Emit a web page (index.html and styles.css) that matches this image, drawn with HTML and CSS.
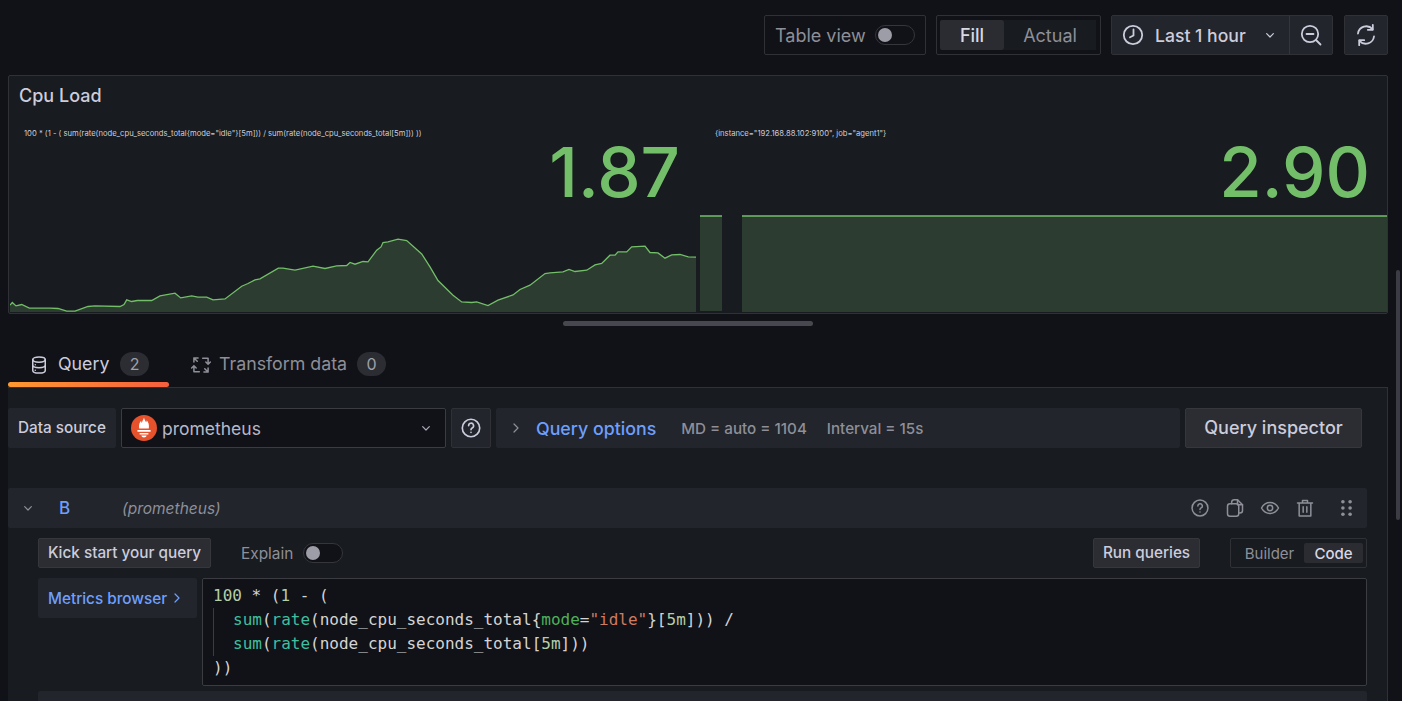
FILE: index.html
```html
<!DOCTYPE html>
<html lang="en">
<head>
    <meta charset="UTF-8">
    <meta name="viewport" content="width=device-width, initial-scale=1.0">
    <title>Cpu Load - Edit panel</title>
    <link rel="stylesheet" href="styles.css">
</head>
<body>
    <div class="page">
        <!-- Top toolbar -->
        <header class="toolbar">
            <div class="box table-view">
                <span>Table view</span>
                <span class="switch"></span>
            </div>
            <div class="box radio-group">
                <span class="radio active">Fill</span>
                <span class="radio">Actual</span>
            </div>
            <div class="time-group">
                <div class="time-picker">
                    <svg class="icon clock" viewBox="0 0 24 24"><circle cx="12" cy="12" r="9.2"/><path d="M12.5 6.5v6l-3.5 1.8"/></svg>
                    <span>Last 1 hour</span>
                    <svg class="icon chevron" viewBox="0 0 24 24"><path d="M7 10l5 5 5-5"/></svg>
                </div>
                <div class="zoom-out">
                    <svg class="icon" viewBox="0 0 24 24"><circle cx="11" cy="11" r="8.2"/><path d="M7.5 11h7M17 17l4.5 4.5"/></svg>
                </div>
            </div>
            <div class="refresh">
                <svg class="icon" viewBox="0 0 24 24"><path d="M4 10.500A8.300 8.300 0 0 1 18.500 6.200M20 13.500A8.300 8.300 0 0 1 5.500 17.800"/><path d="M18.800 1.800v5h-5M5.200 22.200v-5h5"/></svg>
            </div>
        </header>

        <!-- Stat panel -->
        <section class="panel">
            <h2 class="panel-title">Cpu Load</h2>
            <div class="stats">
                <div class="stat stat-left">
                    <svg class="spark" viewBox="0 -79.500 686 199" preserveAspectRatio="none">
                        <path class="spark-fill" d="M0 112.7L2.3 110 6 113.4 11.7 112 19.3 115.7 40 115.7 48 116 56.7 118.7 65 118.7 78 114 85 113.4 110 114 114 112 116.7 107.4 121.7 109 127.3 108 141.7 108 150 103.4 165 100.7 170.7 105.4 181.7 103.4 188 104.7 196.7 104.7 203 107.4 215 106.4 231.7 93.7 238 91 245 87.4 250 86.4 268.3 75.7 273 75.7 285 77.7 303 73.7 315 76 326.7 73.4 336.7 73 340 70 345 71.7 353 69 358 69.4 366.7 57.7 371 54.4 373 50 378 49.4 388 46.7 396.7 48 411.7 61.4 420 74.4 428 88 443 102.7 451.7 109.4 461.7 110 466.7 109.4 478 113 488 107.7 503 102.4 510 97 520 92.7 535 81 540 80.4 553 79.4 559 77 565 79 576.7 77.7 585 72.4 591.7 71 600 62.7 605 62.7 608 59.4 616.7 59.4 621.7 54.4 635 53.7 640 60 648 60.4 655 65.7 661.7 62.4 670 62 678.3 64.4 686 64.7V119.5H0Z"/>
                        <path class="spark-line" d="M0 112.7L2.3 110 6 113.4 11.7 112 19.3 115.7 40 115.7 48 116 56.7 118.7 65 118.7 78 114 85 113.4 110 114 114 112 116.7 107.4 121.7 109 127.3 108 141.7 108 150 103.4 165 100.7 170.7 105.4 181.7 103.4 188 104.7 196.7 104.7 203 107.4 215 106.4 231.7 93.7 238 91 245 87.4 250 86.4 268.3 75.7 273 75.7 285 77.7 303 73.7 315 76 326.7 73.4 336.7 73 340 70 345 71.7 353 69 358 69.4 366.7 57.7 371 54.4 373 50 378 49.4 388 46.7 396.7 48 411.7 61.4 420 74.4 428 88 443 102.7 451.7 109.4 461.7 110 466.7 109.4 478 113 488 107.7 503 102.4 510 97 520 92.7 535 81 540 80.4 553 79.4 559 77 565 79 576.7 77.7 585 72.4 591.7 71 600 62.7 605 62.7 608 59.4 616.7 59.4 621.7 54.4 635 53.7 640 60 648 60.4 655 65.7 661.7 62.4 670 62 678.3 64.4 686 64.7"/>
                    </svg>
                    <div class="stat-label">100 * (1 - ( sum(rate(node_cpu_seconds_total{mode="idle"}[5m])) / sum(rate(node_cpu_seconds_total[5m])) ))</div>
                    <div class="stat-value">1.87</div>
                </div>
                <div class="stat stat-right">
                    <svg class="spark" viewBox="0 -79.500 687 199" preserveAspectRatio="none">
                        <path class="spark-fill" d="M0 23.5H22V118.5H0ZM42 23.5H687V119.5H42Z"/>
                        <path class="spark-line" d="M0 23.5H22M42 23.5H687"/>
                    </svg>
                    <div class="stat-label">{instance="192.168.88.102:9100", job="agent1"}</div>
                    <div class="stat-value">2.90</div>
                </div>
            </div>
        </section>

        <div class="splitter"><span class="splitter-thumb"></span></div>

        <!-- Tabs -->
        <nav class="tabs">
            <div class="tab active">
                <svg class="icon" viewBox="0 0 24 24"><ellipse cx="12" cy="5.5" rx="7.5" ry="3.2"/><path d="M4.5 5.5v13c0 1.8 3.4 3.2 7.5 3.2s7.5-1.4 7.5-3.2v-13M4.5 12c0 1.8 3.4 3.2 7.5 3.2s7.5-1.4 7.5-3.2"/><path d="M7.5 11.8h.01M7.5 18.2h.01"/></svg>
                <span>Query</span>
                <span class="counter">2</span>
            </div>
            <div class="tab">
                <svg class="icon" viewBox="0 0 24 24"><path d="M8.500 3.500H3.500V8.500M3.500 3.500L7.500 7.500M14 4h6.500v7M17.800 8.500l2.700 2.700 2.700-2.700M15.500 20.500h5v-5M20.500 20.500l-4-4M10 20h-6.500v-7M.8 15.500l2.700-2.700 2.700 2.700"/></svg>
                <span>Transform data</span>
                <span class="counter">0</span>
            </div>
        </nav>

        <!-- Query editor -->
        <section class="editor">
            <div class="ds-row">
                <div class="ds-label">Data source</div>
                <div class="ds-select">
                    <svg class="prom-logo" viewBox="0 0 26 26">
                        <circle cx="13" cy="13" r="13" fill="#e6522c"/>
                        <path fill="#fff" d="M13 2.500c.3 2.400 1.600 3.200 2 4.800.5-.5.8-1.300.7-2.100 1.600 1.800 2.700 4.200 2.100 8.300H8.200C7.600 9.600 8.600 7.500 10.200 5.800c-.1.900.1 1.700.7 2.300.1-2.200 1.400-3 2.100-5.600zM6.400 15h13.200v1.800H6.400zM8.600 18h8.800v1.500H8.600zM10.300 20.600h5.400c-.3 1.200-1.400 2-2.700 2s-2.400-.8-2.700-2z"/>
                    </svg>
                    <span class="ds-name">prometheus</span>
                    <svg class="icon chevron" viewBox="0 0 24 24"><path d="M7 10l5 5 5-5"/></svg>
                </div>
                <div class="help-btn">
                    <svg class="icon" viewBox="0 0 24 24"><circle cx="12" cy="12" r="9.500"/><path d="M9.400 9.500a2.700 2.700 0 1 1 3.900 2.400c-.9.500-1.300 1-1.300 2"/><path d="M12 16.800h.01"/></svg>
                </div>
                <div class="query-options">
                    <svg class="icon caret" viewBox="0 0 24 24"><path d="M9 6l6 6-6 6"/></svg>
                    <span class="link-title">Query options</span>
                    <span class="meta">MD = auto = 1104</span>
                    <span class="meta">Interval = 15s</span>
                </div>
                <div class="btn btn-large">Query inspector</div>
            </div>

            <div class="query-row">
                <svg class="icon chevron row-toggle" viewBox="0 0 24 24"><path d="M7 10l5 5 5-5"/></svg>
                <span class="ref-id">B</span>
                <span class="row-source">(prometheus)</span>
                <div class="row-actions">
                    <svg class="icon" viewBox="0 0 24 24"><circle cx="12" cy="12" r="9.500"/><path d="M9.400 9.500a2.700 2.700 0 1 1 3.900 2.400c-.9.500-1.300 1-1.300 2"/><path d="M12 16.800h.01"/></svg>
                    <svg class="icon" viewBox="0 0 24 24"><path d="M8 7V5a3 3 0 0 1 3-3h4l6 6v7a3 3 0 0 1-3 3h-1.500"/><path d="M15 2v6h6"/><rect x="3" y="7" width="13.500" height="15" rx="3"/></svg>
                    <svg class="icon" viewBox="0 0 24 24"><path d="M1.800 12C4.200 7.600 7.800 5.400 12 5.400s7.800 2.200 10.200 6.600c-2.400 4.400-6 6.600-10.200 6.600S4.200 16.400 1.800 12z"/><circle cx="12" cy="12" r="3.200"/></svg>
                    <svg class="icon" viewBox="0 0 24 24"><path d="M3 6h18M9 6V3h6v3M5 6v15.500h14V6M9.800 10.500v6.500M14.200 10.500v6.500"/></svg>
                    <svg class="grip" viewBox="0 0 14 20"><circle cx="3" cy="3" r="2"/><circle cx="11" cy="3" r="2"/><circle cx="3" cy="10" r="2"/><circle cx="11" cy="10" r="2"/><circle cx="3" cy="17" r="2"/><circle cx="11" cy="17" r="2"/></svg>
                </div>
            </div>

            <div class="query-body">
                <div class="query-tools">
                    <div class="btn btn-small kick-start">Kick start your query</div>
                    <span class="explain">Explain</span>
                    <span class="switch"></span>
                    <div class="query-tools-right">
                        <div class="btn btn-small run-queries">Run queries</div>
                        <div class="box radio-group small">
                            <span class="radio">Builder</span>
                            <span class="radio active">Code</span>
                        </div>
                    </div>
                </div>
                <div class="query-input">
                    <div class="metrics-browser">
                        <span>Metrics browser</span>
                        <svg class="icon" viewBox="0 0 24 24"><path d="M9 6l6 6-6 6"/></svg>
                    </div>
                    <div class="code">
                        <div class="code-line"><span class="num">100</span> * (<span class="num">1</span> - (</div>
                        <div class="code-line indent"><span class="fn">sum</span>(<span class="fn">rate</span>(node_cpu_seconds_total{<span class="key">mode</span>=<span class="str">"idle"</span>}[<span class="num">5m</span>])) /</div>
                        <div class="code-line indent"><span class="fn">sum</span>(<span class="fn">rate</span>(node_cpu_seconds_total[<span class="num">5m</span>]))</div>
                        <div class="code-line">))</div>
                    </div>
                </div>
                <div class="next-row"></div>
            </div>
        </section>
    </div>
    <div class="page-scrollbar"></div>
</body>
</html>
```

FILE: styles.css
```css
html, body {
  height: 701px;
  margin: 0;
  overflow: hidden;
}

body {
  background-color: #111217;
  color: #ccccdc;
  font-family: Inter, "Noto Sans", sans-serif;
}

.page {
  padding: 15px 14px 0 8px;
}

.icon {
  width: 20px;
  height: 20px;
  flex: none;
  fill: none;
  stroke: currentColor;
  stroke-width: 1.800;
  stroke-linecap: round;
  stroke-linejoin: round;
}

.chevron {
  width: 16px;
  height: 16px;
}

/* Toolbar */
.toolbar {
  display: flex;
  justify-content: flex-end;
  gap: 10px;
  height: 40px;
}

.toolbar .icon {
  width: 24px;
  height: 24px;
  stroke-width: 1.800;
}

.toolbar .chevron {
  width: 16px;
  height: 16px;
}

.box {
  display: flex;
  align-items: center;
  box-sizing: border-box;
  border: 1px solid #2f3137;
  border-radius: 2px;
}

.table-view {
  width: 162px;
  padding-left: 10px;
  gap: 9px;
  font-size: 18px;
  color: #8e8f99;
}

.switch {
  display: inline-block;
  position: relative;
  box-sizing: border-box;
  width: 40px;
  height: 20px;
  background-color: #111217;
  border: 1px solid #34363c;
  border-radius: 10px;
}

.switch::after {
  content: "";
  position: absolute;
  left: 2px;
  top: 2px;
  width: 14px;
  height: 14px;
  background-color: #9d9da8;
  border-radius: 50%;
}

.radio-group {
  width: 165px;
  padding: 4px 4px 4px 3px;
  font-size: 18px;
}

.radio {
  display: flex;
  align-items: center;
  justify-content: center;
  height: 100%;
  color: #8e8f99;
  background-color: #181b1f;
}

.radio-group .radio:first-child {
  width: 64px;
}

.radio-group .radio:last-child {
  flex: 1;
}

.radio.active {
  color: #d8d9e3;
  font-weight: 500;
  background-color: #2a2c32;
  border-radius: 2px;
}

.time-group {
  display: flex;
  width: 222px;
  box-sizing: border-box;
  background-color: #22252b;
  border: 1px solid #2f3137;
  border-radius: 2px;
}

.time-picker {
  display: flex;
  align-items: center;
  width: 177px;
  padding-left: 9px;
  box-sizing: border-box;
  font-size: 17.600px;
  font-weight: 500;
  color: #ccccdc;
}

.time-picker span {
  margin-left: 10px;
}

.time-picker .chevron {
  margin-left: 16px;
}

.zoom-out {
  flex: 1;
  display: flex;
  align-items: center;
  justify-content: center;
  border-left: 1px solid #34363c;
}

.refresh {
  display: flex;
  align-items: center;
  justify-content: center;
  width: 44px;
  margin-left: 1px;
  background-color: #22252b;
  border: 1px solid #2f3137;
  border-radius: 2px;
  box-sizing: border-box;
}

/* Panel */
.panel {
  box-sizing: border-box;
  height: 239px;
  margin-top: 20px;
  background-color: #181b1f;
  border: 1px solid #2f3137;
  border-radius: 2px;
  position: relative;
}

.panel-title {
  height: 39px;
  margin: 0;
  padding-left: 10px;
  font-size: 18px;
  font-weight: 500;
  line-height: 39px;
  color: #ccccdc;
}

.stats {
  display: flex;
  justify-content: space-between;
  position: absolute;
  left: 1px;
  right: 0;
  bottom: 1px;
  height: 199px;
}

.stat {
  position: relative;
  width: 686px;
  height: 199px;
}

.stat-right {
  width: 687px;
}

.spark {
  position: absolute;
  left: 0;
  top: 0;
  width: 100%;
  height: 100%;
}

.spark-fill {
  fill: #2c3c30;
}

.spark-line {
  fill: none;
  stroke: #73bf69;
  stroke-width: 1.300;
}

.stat-label {
  position: relative;
  padding: 16px 0 0 14px;
  font-size: 7.650px;
  line-height: 9px;
  color: #ccccdc;
  white-space: nowrap;
}

.stat-right .stat-label {
  padding-left: 15px;
}

.stat-value {
  position: relative;
  padding-right: 16px;
  margin-top: -3px;
  font-size: 69px;
  line-height: 75px;
  font-weight: 500;
  text-align: right;
  color: #73bf69;
}

.stat-right .stat-value {
  padding-right: 17px;
}

/* Splitter */
.splitter {
  display: flex;
  justify-content: center;
  height: 31px;
  padding-top: 7px;
  box-sizing: border-box;
}

.splitter-thumb {
  width: 250px;
  height: 5px;
  margin-left: -20px;
  background-color: #47484f;
  border-radius: 3px;
}

/* Tabs */
.tabs {
  display: flex;
  height: 42px;
}

.tab {
  display: flex;
  align-items: flex-start;
  position: relative;
  box-sizing: border-box;
  padding: 7px 20px 0 22px;
  gap: 8px;
  font-size: 17.800px;
  line-height: 24px;
  color: #8e8f99;
}

.tab:first-child {
  width: 161px;
  padding-left: 21px;
  gap: 9px;
  color: #ccccdc;
}

.tab .icon {
  margin-top: 3px;
}

.tab.active::after {
  content: "";
  position: absolute;
  left: 0;
  right: 0;
  bottom: 0;
  height: 5px;
  background-image: linear-gradient(90deg, #ff9830, #f55f3e);
  border-radius: 3px;
}

.counter {
  width: 29px;
  height: 24px;
  margin-left: 2px;
  background-color: #2b2d33;
  border-radius: 12px;
  font-size: 16px;
  text-align: center;
  color: #9fa0aa;
}

/* Editor */
.editor {
  box-sizing: border-box;
  height: 314px;
  padding: 20px 20px 0 0;
  background-color: #181b1f;
  border-top: 1px solid #2f3137;
  border-right: 1px solid #2f3137;
}

.ds-row {
  display: flex;
  height: 40px;
}

.ds-label {
  width: 108px;
  background-color: #22252b;
  border-radius: 2px;
  font-size: 15.300px;
  font-weight: 500;
  line-height: 40px;
  text-align: center;
  color: #ccccdc;
}

.ds-select {
  display: flex;
  align-items: center;
  box-sizing: border-box;
  width: 325px;
  margin-left: 5px;
  padding: 0 11px 0 9px;
  background-color: #111217;
  border: 1px solid #3a3c42;
  border-radius: 2px;
  color: #a9a9b8;
}

.prom-logo {
  width: 26px;
  height: 26px;
  flex: none;
}

.ds-name {
  flex: 1;
  margin-left: 5px;
  font-size: 17.500px;
  color: #b8b8c6;
}

.help-btn {
  display: flex;
  align-items: center;
  justify-content: center;
  box-sizing: border-box;
  width: 40px;
  margin-left: 5px;
  background-color: #22252b;
  border: 1px solid #2f3137;
  border-radius: 2px;
}

.help-btn .icon {
  width: 22px;
  height: 22px;
}

.query-options {
  display: flex;
  align-items: center;
  width: 684px;
  margin-left: 5px;
  background-color: #22252b;
  border-radius: 2px;
  color: #8e8f99;
}

.caret {
  width: 16px;
  height: 16px;
  margin-left: 12px;
  margin-right: 12px;
}

.link-title {
  margin-right: 25px;
  font-size: 17.800px;
  font-weight: 500;
  color: #6e9fff;
}

.meta {
  margin-right: 20px;
  font-size: 15.200px;
  font-weight: 500;
}

.btn {
  box-sizing: border-box;
  background-color: #2b2d33;
  border: 1px solid #35373d;
  border-radius: 2px;
  color: #ccccdc;
  font-weight: 500;
  text-align: center;
}

.btn-large {
  width: 177px;
  margin-left: 5px;
  font-size: 18px;
  line-height: 38px;
}

.btn-small {
  font-size: 15.300px;
  line-height: 28px;
}

.kick-start {
  width: 173px;
}

.run-queries {
  width: 107px;
}

.query-row {
  display: flex;
  align-items: center;
  height: 40px;
  margin-top: 40px;
  background-color: #22252b;
  border-radius: 2px;
  color: #8e8f99;
}

.row-toggle {
  margin-left: 12px;
}

.ref-id {
  width: 63px;
  margin-left: 23px;
  font-size: 17px;
  font-weight: 500;
  color: #6e9fff;
}

.row-source {
  flex: 1;
  font-size: 15.500px;
  font-style: italic;
}

.row-actions {
  display: flex;
  align-items: center;
  gap: 15px;
  padding-right: 14px;
}

.grip {
  width: 13px;
  height: 18px;
  margin-left: 10px;
  fill: currentColor;
}

.query-body {
  padding: 10px 0 0 30px;
}

.query-tools {
  display: flex;
  align-items: center;
  height: 30px;
}

.explain {
  margin: 0 10px 0 30px;
  font-size: 15.400px;
  color: #8e8f99;
}

.query-tools-right {
  display: flex;
  align-items: stretch;
  height: 30px;
  margin-left: auto;
  gap: 30px;
}

.radio-group.small {
  width: 137px;
  padding: 4px 3px 4px 4px;
  font-size: 15px;
}

.radio-group.small .radio:first-child {
  width: 69px;
  background-color: transparent;
}

.query-input {
  display: flex;
  gap: 5px;
  margin-top: 10px;
}

.metrics-browser {
  display: flex;
  align-items: center;
  gap: 2px;
  box-sizing: border-box;
  width: 159px;
  height: 40px;
  padding-left: 10px;
  background-color: #22252b;
  border-radius: 2px;
  font-size: 15.300px;
  font-weight: 500;
  color: #6e9fff;
}

.metrics-browser .icon {
  width: 16px;
  height: 16px;
}

.code {
  flex: 1;
  box-sizing: border-box;
  height: 108px;
  padding: 5px 10px 0;
  background-color: #111217;
  border: 1px solid #3a3c42;
  border-radius: 2px;
  font-family: "DejaVu Sans Mono", "Liberation Mono", monospace;
  font-size: 16px;
  line-height: 24px;
  color: #d4d4d4;
}

.code-line {
  height: 24px;
  white-space: pre;
}

.code-line.indent {
  padding-left: 19px;
  border-left: 1px solid #3a3c42;
}

.num {
  color: #b5cea8;
}

.fn {
  color: #3fbfa0;
}

.key {
  color: #4fb05a;
}

.str {
  color: #ce7b60;
}

.next-row {
  height: 10px;
  margin-top: 5px;
  background-color: #22252b;
  border-radius: 2px 2px 0 0;
}

.page-scrollbar {
  position: absolute;
  left: 1396px;
  top: 270px;
  width: 4px;
  height: 250px;
  background-color: #3c3d44;
  border-radius: 2px;
}
```
